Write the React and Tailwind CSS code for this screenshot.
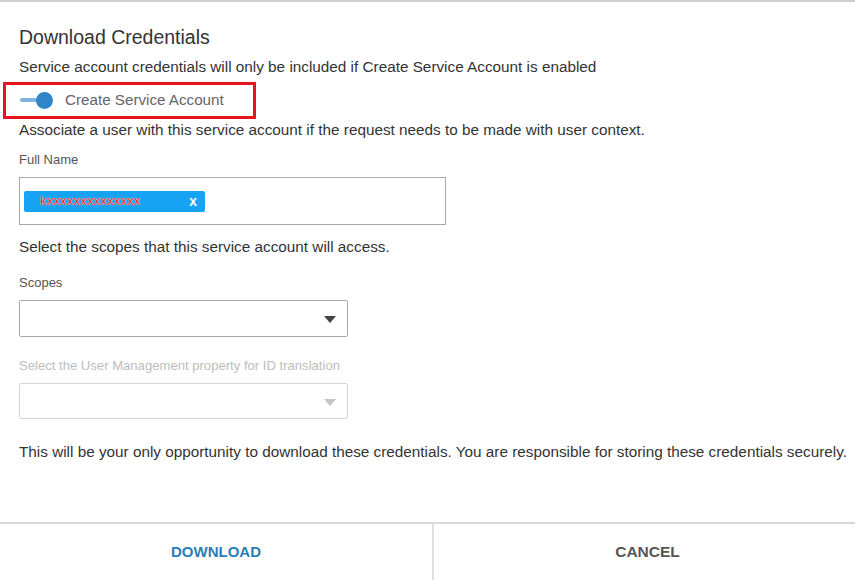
import React from "react";

function Arrow({ light }) {
  return (
    <svg width="12" height="7" viewBox="0 0 12 7" className="absolute right-[11px] top-[15px]">
      <path d="M0 0 H12 L6 7 Z" fill={light ? "#c4c4c4" : "#444"} />
    </svg>
  );
}

export default function App() {
  return (
    <div className="w-[855px] h-[580px] bg-white border-t-2 border-[#cfcfcf] flex flex-col font-['Liberation_Sans',Arial,sans-serif] text-[#333] overflow-hidden">
      <div className="flex-1 flex flex-col pl-[19px]">
        <div className="mt-[24px] text-[19.5px] leading-[22px] text-[#333]">Download Credentials</div>
        <div className="mt-[10px] text-[15.3px] leading-[18px]">Service account credentials will only be included if Create Service Account is enabled</div>
        <div className="mt-[6px] -ml-[16px] w-[253px] h-[37px] border-[3px] border-[#e8141c] flex items-center">
          <div className="relative w-[30px] h-[18px] ml-[14px]">
            <div className="absolute left-0 top-[6px] w-[26px] h-[4px] rounded-full bg-[#7eb3dd]"></div>
            <div className="absolute left-[16px] top-0 w-[17px] h-[17px] rounded-full bg-[#2e86c8]"></div>
          </div>
          <span className="ml-[15px] text-[15.2px] text-[#666]">Create Service Account</span>
        </div>
        <div className="mt-[2px] text-[15.3px] leading-[18px]">Associate a user with this service account if the request needs to be made with user context.</div>
        <div className="mt-[13px] text-[13px] leading-[16px] text-[#555]">Full Name</div>
        <div className="mt-[9px] w-[427px] h-[48px] border border-[#a9a9a9] flex items-center pl-[4px]">
          <div className="w-[181px] h-[21px] rounded-[2px] bg-[#16a3f3] flex items-center justify-between pl-[16px] pr-[8px]">
            <span className="text-[13px] text-[#e3121b] tracking-[0.2px] [text-shadow:0_0_1px_#ffffff,0_0_1px_#ffffff]">kxxxxxxxxxxxxxx</span>
            <span className="text-white text-[14px] font-bold">x</span>
          </div>
        </div>
        <div className="mt-[13px] text-[15.3px] leading-[18px]">Select the scopes that this service account will access.</div>
        <div className="mt-[19px] text-[13px] leading-[16px] text-[#555]">Scopes</div>
        <div className="relative mt-[9px] w-[329px] h-[37px] border border-[#a9a9a9] rounded-[2px]">
          <Arrow />
        </div>
        <div className="mt-[21px] text-[13.1px] leading-[16px] text-[#bdbdbd]">Select the User Management property for ID translation</div>
        <div className="relative mt-[9px] w-[329px] h-[36px] border border-[#d6d6d6] rounded-[2px]">
          <Arrow light />
        </div>
        <div className="mt-[24px] text-[15.3px] leading-[18px] whitespace-nowrap">This will be your only opportunity to download these credentials. You are responsible for storing these credentials securely.</div>
      </div>
      <div className="h-[58px] border-t-2 border-[#d9d9d9] flex">
        <div className="w-[434px] border-r-2 border-[#dedede] flex items-center justify-center text-[15px] font-bold text-[#2b7db8]">DOWNLOAD</div>
        <div className="flex-1 flex items-center justify-center pl-[6px] text-[15.5px] font-bold text-[#555]">CANCEL</div>
      </div>
    </div>
  );
}
